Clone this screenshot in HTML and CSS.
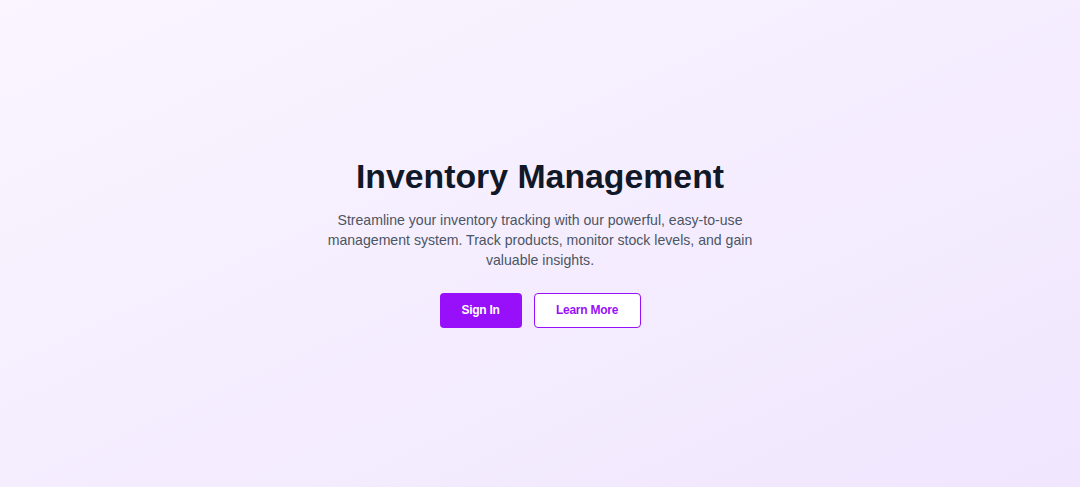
FILE: index.html
```html
<!DOCTYPE html>
<html lang="en">
<head>
<meta charset="utf-8">
<title>Inventory Management</title>
<link rel="stylesheet" href="styles.css">
</head>
<body>
<main class="hero">
  <div class="content">
    <h1 class="title">Inventory Management</h1>
    <p class="lead">Streamline your inventory tracking with our powerful, easy-to-use management system. Track products, monitor stock levels, and gain valuable insights.</p>
    <div class="actions">
      <a class="btn btn-primary" href="#">Sign In</a>
      <a class="btn btn-outline" href="#">Learn More</a>
    </div>
  </div>
</main>
</body>
</html>
```

FILE: styles.css
```css
* { box-sizing: border-box; }
html, body { margin: 0; padding: 0; height: 100%; }
body {
  font-family: "Liberation Sans", Arial, sans-serif;
  background: linear-gradient(to bottom right, #faf5ff, #f0e6fe);
}
.hero {
  min-height: 100vh;
  padding-bottom: 4px;
  display: flex;
  align-items: center;
  justify-content: center;
}
.content {
  display: flex;
  flex-direction: column;
  align-items: center;
  text-align: center;
}
.title {
  margin: 0;
  font-size: 33.8px;
  line-height: 40px;
  font-weight: 700;
  color: #111827;
}
.lead {
  margin: 14px 0 0;
  width: 436px;
  font-size: 14.1px;
  line-height: 20px;
  color: #4b5563;
}
.actions {
  display: flex;
  gap: 12px;
  margin-top: 23px;
}
.btn {
  display: flex;
  align-items: center;
  justify-content: center;
  height: 35px;
  border-radius: 4px;
  font-size: 12px;
  letter-spacing: -0.25px;
  font-weight: 700;
  text-decoration: none;
}
.btn-primary {
  width: 82px;
  background: #9810fa;
  color: #ffffff;
}
.btn-outline {
  width: 107px;
  background: #ffffff;
  color: #9810fa;
  border: 1.5px solid #9810fa;
}
```
